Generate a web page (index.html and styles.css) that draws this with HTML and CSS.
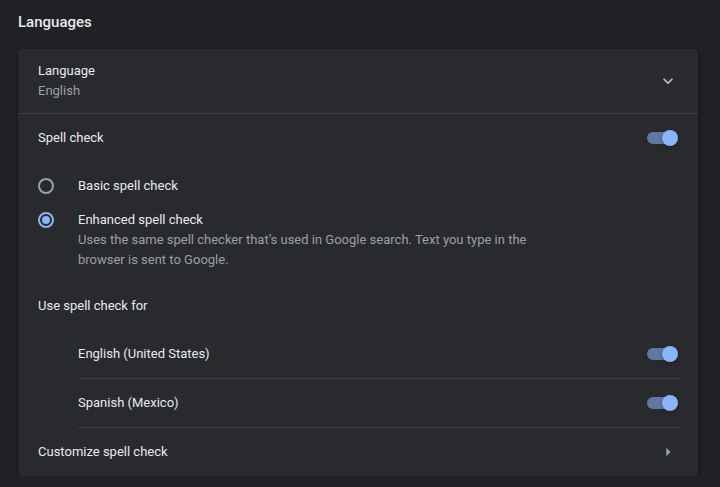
FILE: index.html
```html
<!DOCTYPE html>
<html lang="en">
<head>
<meta charset="utf-8">
<title>Languages</title>
<link rel="stylesheet" href="styles.css">
</head>
<body>
<main class="page">
  <h2 class="section-title">Languages</h2>
  <section class="card">
    <div class="row row-lang">
      <div class="text-block">
        <div class="primary">Language</div>
        <div class="secondary">English</div>
      </div>
      <svg class="icon chevron" viewBox="0 0 24 24" width="20" height="20"><path d="M16.59 8.59L12 13.17 7.41 8.59 6 10l6 6 6-6z"/></svg>
    </div>
    <div class="row row-spell">
      <div class="primary">Spell check</div>
      <span class="toggle on"><span class="track"></span><span class="knob"></span></span>
    </div>
    <div class="radio-group">
      <div class="radio-row">
        <span class="radio"></span>
        <div class="primary">Basic spell check</div>
      </div>
      <div class="radio-row radio-row-desc">
        <span class="radio checked"></span>
        <div class="text-block">
          <div class="primary">Enhanced spell check</div>
          <div class="secondary desc">Uses the same spell checker that’s used in Google search. Text you type in the browser is sent to Google.</div>
        </div>
      </div>
    </div>
    <div class="row row-plain">
      <div class="primary">Use spell check for</div>
    </div>
    <div class="sub-list">
      <div class="sub-row with-divider">
        <div class="primary">English (United States)</div>
        <span class="toggle on"><span class="track"></span><span class="knob"></span></span>
      </div>
      <div class="sub-row with-divider">
        <div class="primary">Spanish (Mexico)</div>
        <span class="toggle on"><span class="track"></span><span class="knob"></span></span>
      </div>
    </div>
    <div class="row row-link">
      <div class="primary">Customize spell check</div>
      <svg class="icon arrow" viewBox="0 0 24 24" width="20" height="20"><path d="M10 17l5-5-5-5v10z"/></svg>
    </div>
  </section>
</main>
</body>
</html>
```

FILE: styles.css
```css
* { box-sizing: border-box; }

html, body {
  margin: 0;
  padding: 0;
  background: #202124;
}

body {
  font-family: Roboto, "Noto Sans", "Liberation Sans", sans-serif;
  font-size: 13px;
  line-height: 20px;
  color: #e8eaed;
}

.page {
  padding: 12px 22px 0 18px;
}

.section-title {
  margin: 0;
  font-size: 15px;
  font-weight: 500;
  line-height: 20px;
  color: #e8eaed;
}

.card {
  margin-top: 17px;
  background: #292a2d;
  border-radius: 4px;
  box-shadow: 0 1px 2px rgba(0, 0, 0, 0.3), 0 1px 3px 1px rgba(0, 0, 0, 0.15);
}

.primary { color: #e8eaed; }
.secondary { color: #9aa0a6; }

.row {
  display: flex;
  align-items: center;
  justify-content: space-between;
  padding: 0 20px;
  min-height: 48px;
}

.row-lang {
  height: 65px;
  border-bottom: 1px solid rgba(255, 255, 255, 0.1);
}

.icon {
  display: block;
  flex: none;
}

.chevron path { fill: #bdc1c6; }
.arrow path { fill: #9aa0a6; }

.toggle {
  position: relative;
  display: block;
  width: 32px;
  height: 16px;
  flex: none;
}

.toggle .track {
  position: absolute;
  left: 1px;
  top: 2px;
  width: 28px;
  height: 12px;
  border-radius: 6px;
  background: #5f789f;
}

.toggle .knob {
  position: absolute;
  right: 0;
  top: 0;
  width: 16px;
  height: 16px;
  border-radius: 50%;
  background: #8ab4f8;
  box-shadow: 0 1px 3px rgba(0, 0, 0, 0.4);
}

.radio-group {
  padding: 0 20px;
}

.radio-row {
  display: flex;
  align-items: center;
  gap: 24px;
  height: 48px;
}

.radio-row-desc {
  height: auto;
  align-items: flex-start;
  padding-bottom: 12px;
}

.radio-row-desc .radio {
  margin-top: 2px;
}

.radio {
  position: relative;
  display: block;
  flex: none;
  width: 16px;
  height: 16px;
  border: 2px solid #9aa0a6;
  border-radius: 50%;
}

.radio.checked {
  border-color: #8ab4f8;
}

.radio.checked::after {
  content: "";
  position: absolute;
  left: 2px;
  top: 2px;
  width: 8px;
  height: 8px;
  border-radius: 50%;
  background: #8ab4f8;
}

.desc {
  max-width: 465px;
}

.sub-list {
  margin: 0 18px 0 60px;
}

.sub-row {
  display: flex;
  align-items: center;
  justify-content: space-between;
  height: 49px;
  padding-right: 2px;
  padding-bottom: 1px;
}

.with-divider {
  border-bottom: 1px solid rgba(255, 255, 255, 0.1);
}

.row-link {
  height: 48px;
}
```
